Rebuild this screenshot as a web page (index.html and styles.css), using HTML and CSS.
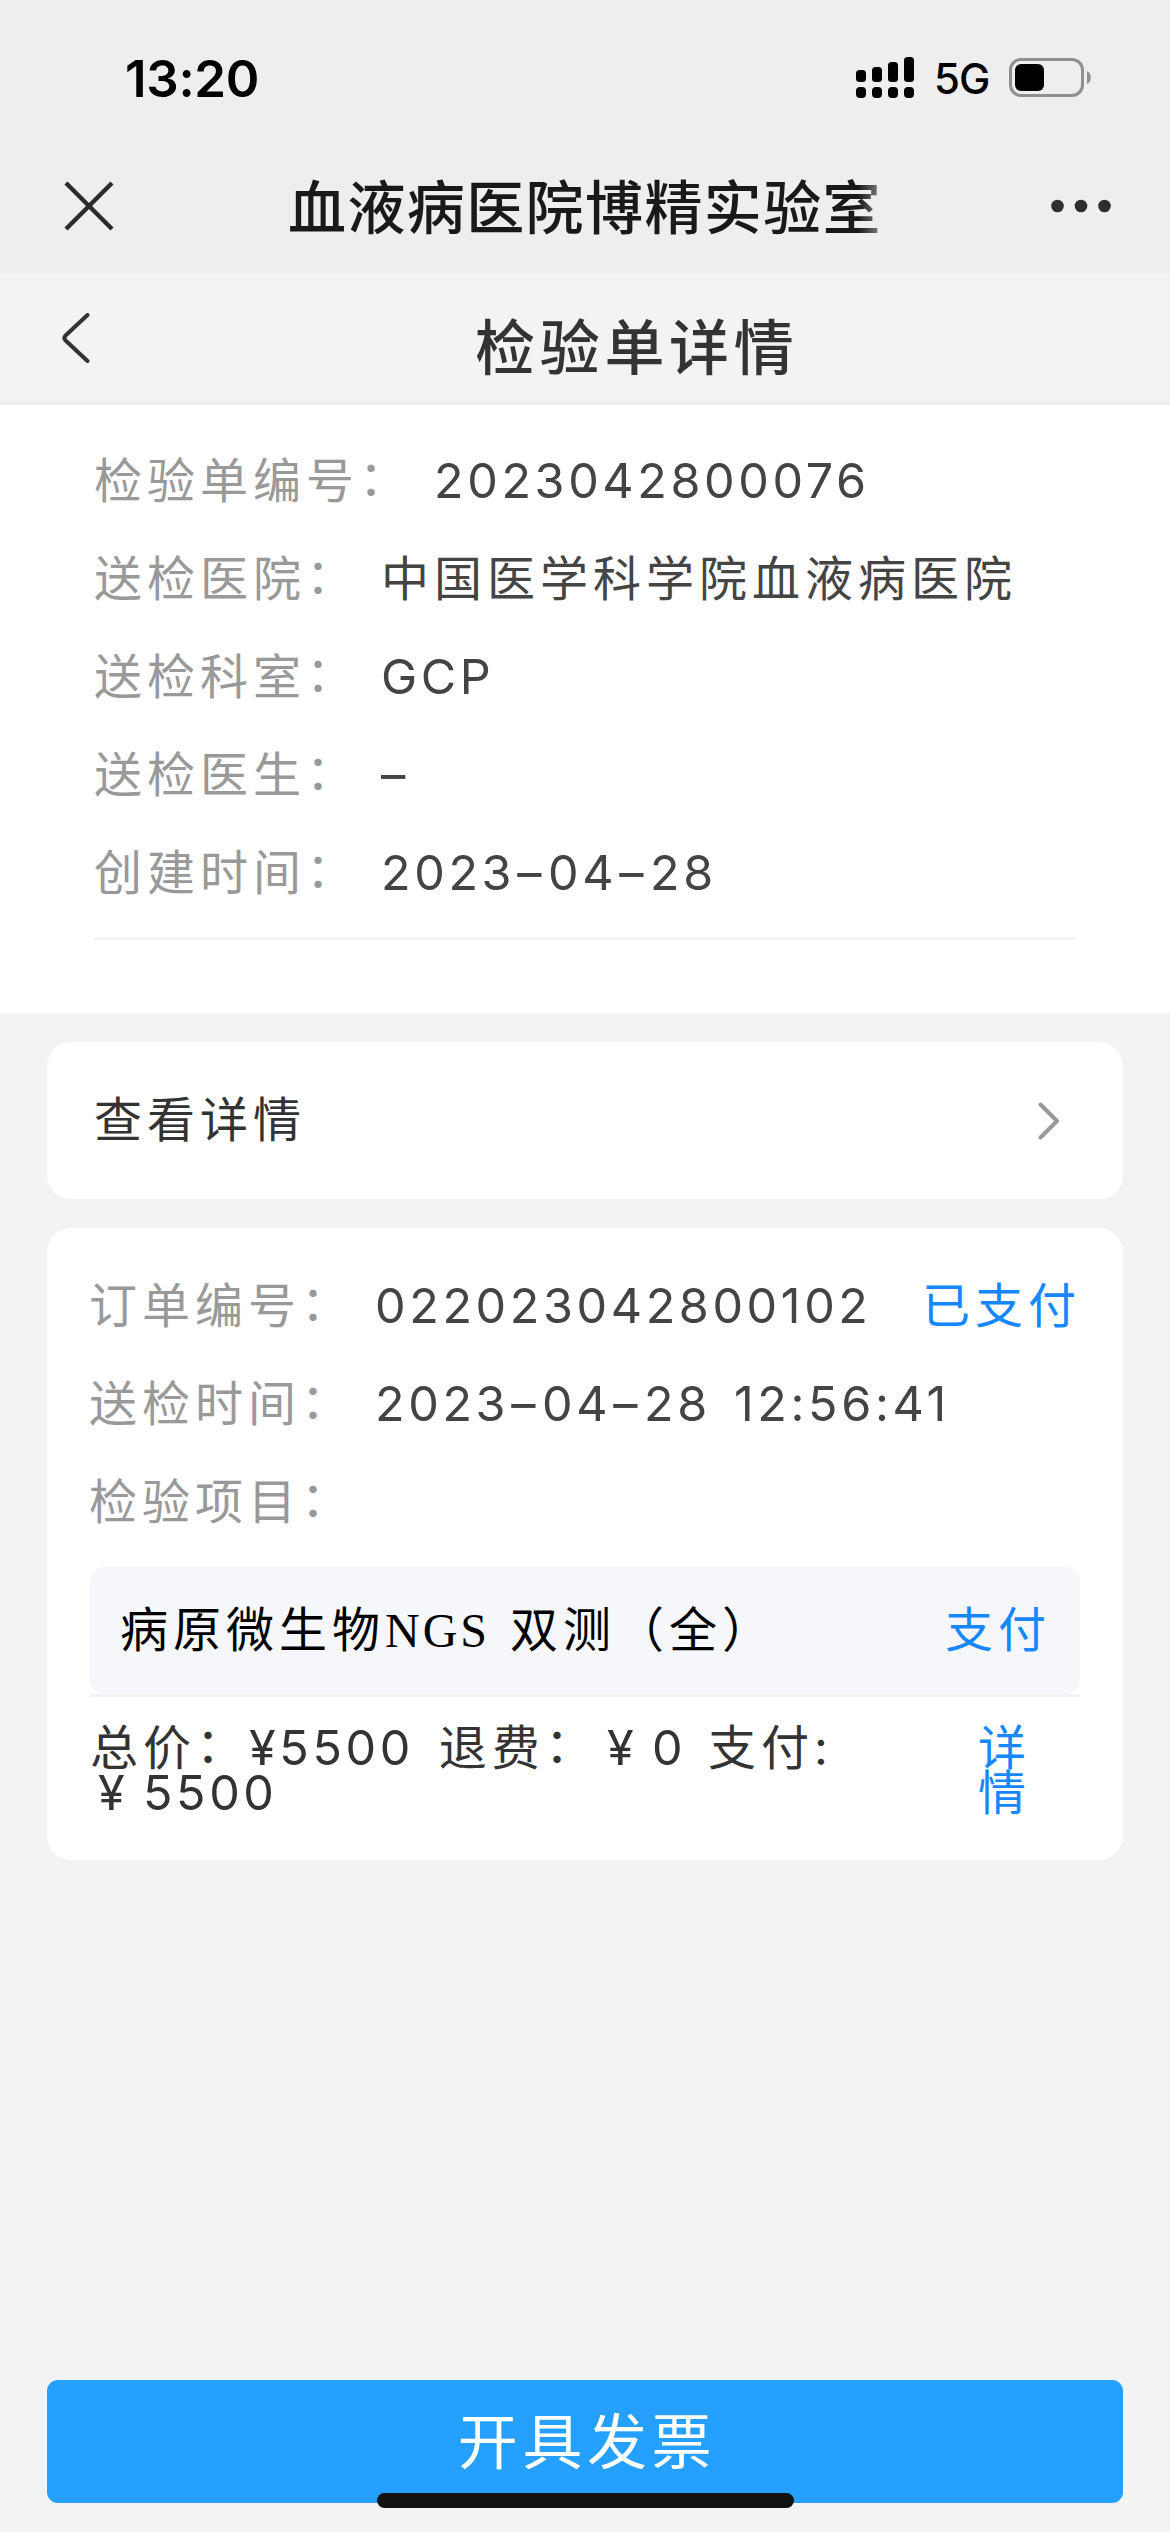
FILE: index.html
```html
<!DOCTYPE html>
<html lang="zh-CN">
<head>
    <meta charset="UTF-8">
    <meta name="viewport" content="width=device-width, initial-scale=1.0">
    <title>检验单详情</title>
    <link rel="stylesheet" href="styles.css">
</head>
<body>
    <header class="top">
        <div class="status-bar">
            <span class="time">13:20</span>
            <svg class="signal" width="58" height="42" viewBox="0 0 58 42">
                <rect x="0" y="13" width="10" height="12" rx="3.5"/>
                <rect x="16" y="10" width="10" height="15" rx="3.5"/>
                <rect x="32" y="5" width="10" height="20" rx="3.5"/>
                <rect x="48" y="0" width="10" height="25" rx="3.5"/>
                <rect x="0" y="30" width="10" height="11" rx="4"/>
                <rect x="16" y="30" width="10" height="11" rx="4"/>
                <rect x="32" y="30" width="10" height="11" rx="4"/>
                <rect x="48" y="30" width="10" height="11" rx="4"/>
            </svg>
            <span class="network">5G</span>
            <svg class="battery" width="83" height="40" viewBox="0 0 83 40">
                <rect x="1.5" y="1.5" width="72" height="36" rx="10.5" fill="none" stroke="#8f8f8f" stroke-width="3"/>
                <rect x="6" y="6" width="29" height="27" rx="6"/>
                <path d="M78 13c5 2 5 11 0 13z" fill="#8f8f8f"/>
            </svg>
        </div>
        <div class="title-bar">
            <svg width="50" height="50" viewBox="0 0 50 50">
                <path d="M2 2l46 46M48 2L2 48" fill="none" stroke="#2b2b2b" stroke-width="4.4"/>
            </svg>
            <h1>血液病医院博精实验<span class="fade">室</span></h1>
            <svg width="60" height="14" viewBox="0 0 60 14" fill="#2e2e2e">
                <circle cx="6.5" cy="7" r="6.3"/>
                <circle cx="30" cy="7" r="6.3"/>
                <circle cx="53.5" cy="7" r="6.3"/>
            </svg>
        </div>
    </header>

    <nav class="nav">
        <svg width="28" height="50" viewBox="0 0 28 50">
            <path d="M25.5 2L3.6 22.5Q1.2 25 3.6 27.5L25.5 48" fill="none" stroke="#333" stroke-width="4" stroke-linecap="round"/>
        </svg>
        <h2>检验单详情</h2>
    </nav>

    <section class="info">
        <div class="row"><span class="label">检验单编号<i>：</i></span><span class="value num">2023042800076</span></div>
        <div class="row"><span class="label">送检医院<i>：</i></span><span class="value">中国医学科学院血液病医院</span></div>
        <div class="row"><span class="label">送检科室<i>：</i></span><span class="value num">GCP</span></div>
        <div class="row"><span class="label">送检医生<i>：</i></span><span class="value num">–</span></div>
        <div class="row"><span class="label">创建时间<i>：</i></span><span class="value num">2023<b>–</b>04<b>–</b>28</span></div>
    </section>

    <main>
        <section class="card link">
            <span>查看详情</span>
            <svg width="22" height="38" viewBox="0 0 22 38">
                <path d="M3.5 2.5L20 19L3.5 35.5" fill="none" stroke="#999" stroke-width="4" stroke-linecap="round" stroke-linejoin="round"/>
            </svg>
        </section>

        <section class="card order">
            <div class="row"><span class="label">订单编号<i>：</i></span><span class="value num">022023042800102</span><span class="blue">已支付</span></div>
            <div class="row"><span class="label">送检时间<i>：</i></span><span class="value num">2023<b>–</b>04<b>–</b>28 12:56:41</span></div>
            <div class="row"><span class="label">检验项目<i>：</i></span></div>
            <div class="item">
                <span>病原微生物<span class="latin">NGS </span>双测（全）</span>
                <span class="blue">支付</span>
            </div>
            <div class="total">
                <p><span>总价<i>：</i></span><span class="num">¥5500</span><span class="refund">退费<i>：</i></span><span class="num yen first">¥</span><span class="num">0</span><span class="pay">支付:</span><br><span class="num yen second">¥</span><span class="num">5500</span></p>
                <a class="blue">详<br>情</a>
            </div>
        </section>
    </main>

    <footer>
        <button>开具发票</button>
        <div class="home-bar"></div>
    </footer>
</body>
</html>
```
FILE: styles.css
```css
* {
    box-sizing: border-box;
}
body {
    margin: 0;
    width: 1170px;
    height: 2532px;
    display: flex;
    flex-direction: column;
    overflow: hidden;
    background: #f3f3f3;
    color: #333;
    font-family: Inter, "Noto Sans CJK SC", sans-serif;
    font-size: 48px;
    letter-spacing: 5px;
}
svg {
    display: block;
    flex: none;
}
/* full-width colon sits a bit low in this font */
i {
    font-style: normal;
    position: relative;
    top: -3px;
}
.num {
    font-size: 48.5px;
    letter-spacing: 3.6px;
    word-spacing: 6px;
}
.num b {
    font-weight: 400;
    margin: 0 3px 0 2px;
}
.top {
    height: 273px;
    background: #eee;
    letter-spacing: 0;
}
.status-bar {
    height: 156px;
    display: flex;
    align-items: center;
    padding-left: 125px;
    color: #000;
}
.time {
    width: 731px;
    font-size: 51px;
    font-weight: 600;
    letter-spacing: -0.3px;
}
.network {
    margin-left: 20px;
    padding-top: 1px;
    width: 75px;
    font-size: 42px;
    font-weight: 500;
    letter-spacing: -1px;
}
.title-bar {
    height: 100px;
    padding: 0 59px 0 64px;
    display: flex;
    align-items: center;
}
.title-bar h1 {
    margin: 3px auto 0 174px;
    font-size: 58px;
    font-weight: 500;
    letter-spacing: 1.4px;
    line-height: 100px;
    color: #191919;
}
.fade {
    background: linear-gradient(to right, #191919 60%, #888 100%);
    -webkit-background-clip: text;
    background-clip: text;
    color: transparent;
}
.nav {
    height: 132px;
    padding: 40px 0 0 62px;
    display: flex;
    border-bottom: 3px solid #ececec;
}
.nav h2 {
    margin: 0 0 0 385px;
    font-size: 60px;
    font-weight: 500;
    line-height: 70px;
    letter-spacing: 4.7px;
}
.info {
    height: 608px;
    padding: 27px 94px 0;
    background: #fff;
}
.info::after {
    content: "";
    display: block;
    margin-top: 15px;
    height: 3px;
    background: #f3f3f3;
}
.row {
    display: flex;
    height: 98px;
    line-height: 98px;
    white-space: pre;
}
.label {
    color: #999;
    margin-right: 22px;
}
.value {
    color: #444;
}
main {
    padding: 29px 47px;
    flex: 1;
}
.card {
    background: #fff;
    border-radius: 24px;
}
.link {
    height: 157px;
    padding: 0 64px 0 47px;
    display: flex;
    justify-content: space-between;
    align-items: center;
}
.link span {
    padding-bottom: 9px;
}
.order {
    height: 632px;
    margin-top: 29px;
    padding: 29px 43px 0;
}
.order .label {
    margin-left: -1px;
    margin-right: 21px;
}
.blue {
    color: #1687ff;
}
.row .blue {
    margin-left: auto;
    margin-right: -1px;
}
.item {
    height: 127px;
    margin-top: 16px;
    padding: 0 29px 9px 30px;
    display: flex;
    justify-content: space-between;
    align-items: center;
    border-radius: 15px;
    background: #f5f7fb;
    color: #000;
    font-family: "Liberation Serif", "Noto Sans CJK SC", serif;
}
.latin {
    letter-spacing: 3px;
    word-spacing: 5px;
}
.total {
    display: flex;
    justify-content: space-between;
    border-top: 3px solid #f3f3f3;
    padding: 28px 49px 0 0;
    line-height: 45px;
}
.total p {
    margin: 0;
    white-space: nowrap;
}
.total p span {
    display: inline-block;
}
.total .refund {
    margin-left: 25px;
}
.total .yen {
    width: 45px;
}
.total .first {
    margin-left: 9px;
}
.total .second {
    margin-left: 8px;
}
.total .pay {
    margin-left: 22px;
}
footer {
    position: relative;
    height: 152px;
    padding: 0 47px;
}
button {
    display: block;
    width: 100%;
    height: 123px;
    padding: 0 0 9px 4px;
    border: none;
    border-radius: 11px;
    background: #25a0ff;
    color: #fff;
    font-family: inherit;
    font-size: 60px;
    letter-spacing: 4.6px;
}
.home-bar {
    position: absolute;
    left: 377px;
    top: 113px;
    width: 417px;
    height: 15px;
    border-radius: 8px;
    background: #111;
}
```
